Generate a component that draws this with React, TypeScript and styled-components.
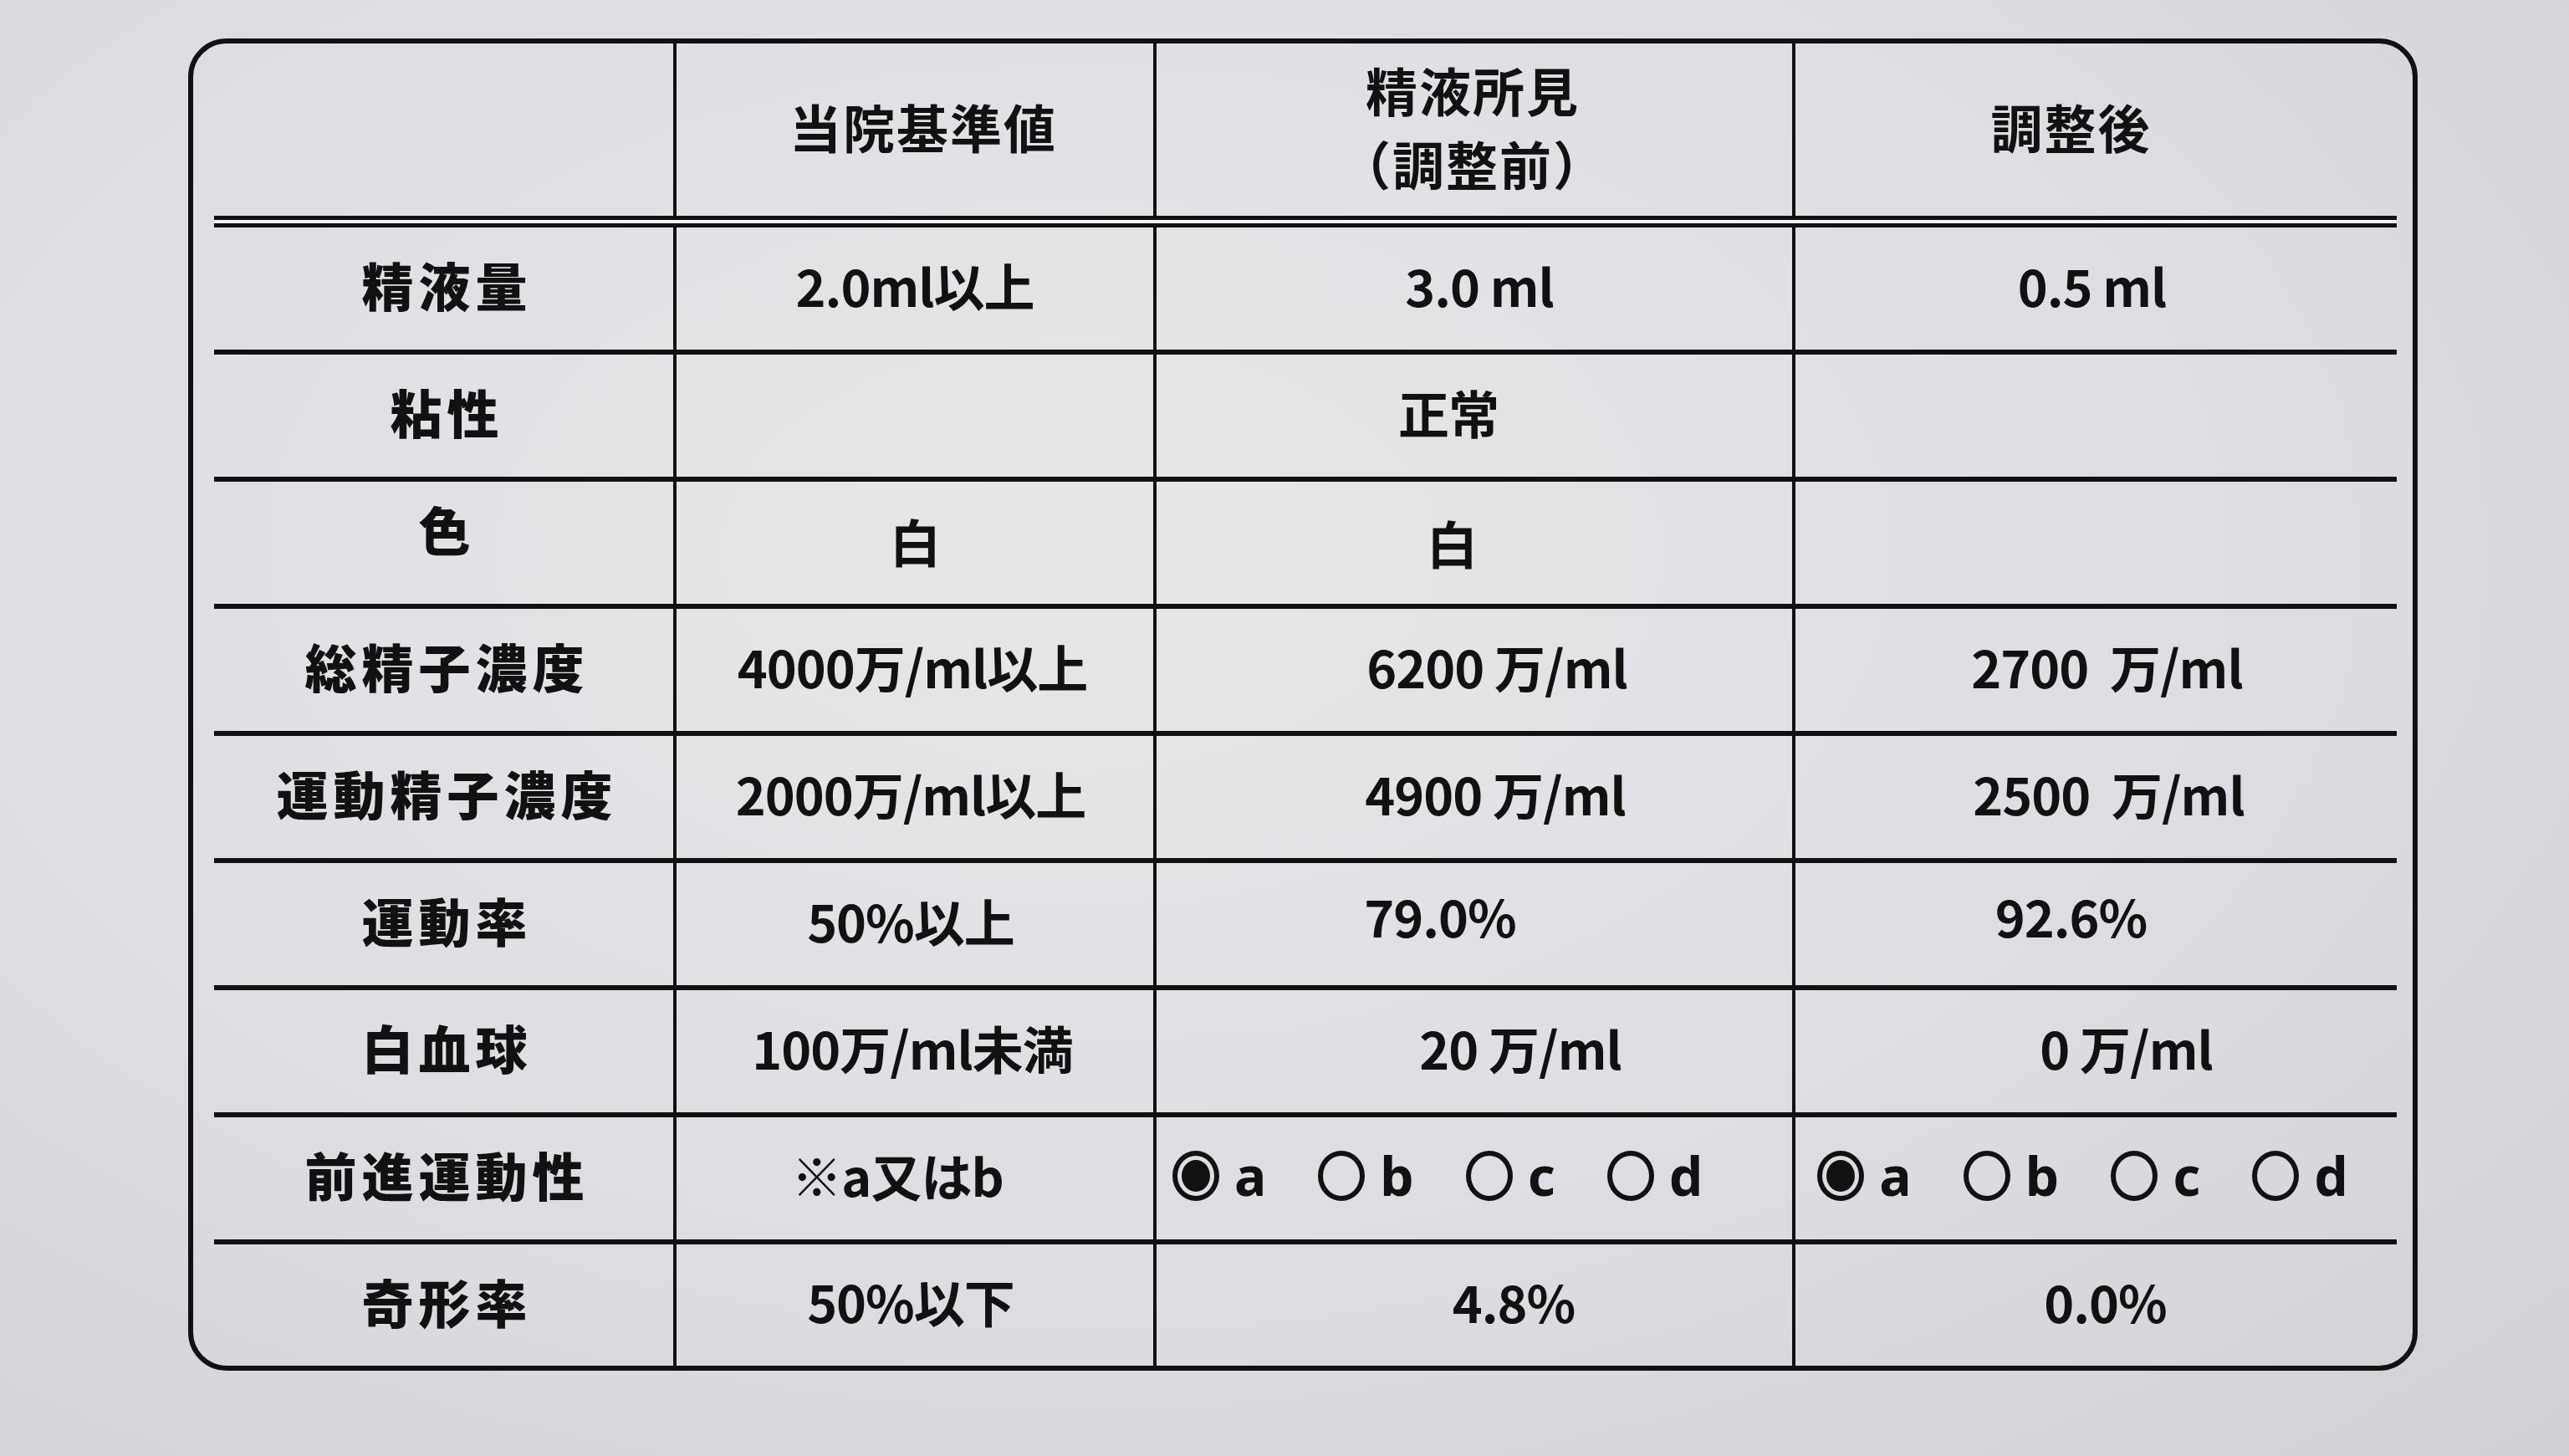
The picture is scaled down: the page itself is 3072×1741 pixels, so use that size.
import React from 'react';
import styled, { createGlobalStyle } from 'styled-components';

const INK = '#111';

const GlobalStyle = createGlobalStyle`
  html, body { margin: 0; padding: 0; }
  body {
    width: 3072px;
    height: 1741px;
    overflow: hidden;
    background: radial-gradient(ellipse at 42% 38%, #e6e7e9 0%, #dddee1 55%, #d0d1d4 100%);
    font-family: "Noto Sans CJK JP", "Noto Sans", sans-serif;
    color: ${INK};
  }
`;

const Page = styled.div`
  padding: 46px 0 0 225px;
`;

const Frame = styled.div`
  box-sizing: border-box;
  width: 2666px;
  border: 6px solid ${INK};
  border-radius: 46px;
  padding: 0 19px 0 25px;
`;

const Grid = styled.div`
  display: grid;
  grid-template-columns: 549px 574px 764px 723px;
`;

const HeadCell = styled.div<{ $lead?: boolean }>`
  box-sizing: border-box;
  height: 206px;
  display: flex;
  align-items: center;
  justify-content: center;
  border-left: ${p => (p.$lead ? 'none' : `4px solid ${INK}`)};
`;

const HeaderRule = styled.div`
  grid-column: 1 / -1;
  height: 4px;
  border-top: 5px solid ${INK};
  border-bottom: 5px solid ${INK};
  background: #f1f2f3;
`;

const Cell = styled.div<{ $lead?: boolean; $end?: boolean }>`
  box-sizing: border-box;
  height: ${p => (p.$end ? 145 : 152)}px;
  display: flex;
  align-items: center;
  justify-content: center;
  border-left: ${p => (p.$lead ? 'none' : `4px solid ${INK}`)};
  border-bottom: ${p => (p.$end ? 'none' : `6px solid ${INK}`)};
`;

const HeadText = styled.div<{ $dx?: number }>`
  font-size: 62px;
  font-weight: 700;
  letter-spacing: 2px;
  line-height: 88px;
  text-align: center;
  transform: translate(${p => p.$dx ?? 0}px, -4px);
`;

const Label = styled.div<{ $dy?: number }>`
  font-size: 62px;
  font-weight: 900;
  letter-spacing: 6px;
  white-space: nowrap;
  transform: translate(4px, ${p => (p.$dy ?? 0) - 5}px);
`;

const Value = styled.div<{ $dx?: number; $dy?: number }>`
  font-size: 61px;
  font-weight: 700;
  letter-spacing: -1px;
  white-space: pre;
  transform: translate(${p => p.$dx ?? 0}px, ${p => (p.$dy ?? 0) - 5}px);
`;

const Options = styled.div<{ $inset: number }>`
  width: 100%;
  display: flex;
  align-items: center;
  padding-left: ${p => p.$inset}px;
  transform: translateY(-3px);
`;

const Option = styled.div`
  display: flex;
  align-items: center;
  margin-right: 62px;
`;

const Radio = styled.span<{ $checked?: boolean }>`
  position: relative;
  box-sizing: border-box;
  width: 56px;
  height: 60px;
  border: 6px solid ${INK};
  border-radius: 50%;
  &::after {
    content: '';
    position: absolute;
    inset: 5px;
    border-radius: 50%;
    background: ${p => (p.$checked ? INK : 'transparent')};
  }
`;

const Letter = styled.span`
  margin-left: 18px;
  font-family: "Noto Sans", "Liberation Sans", sans-serif;
  font-size: 64px;
  font-weight: 700;
  line-height: 1;
`;

type V = [string, number?, number?];

type Row = {
  label: string;
  labelDy?: number;
  norm: V;
  before: V;
  after: V;
};

const rows: Row[] = [
  { label: '精液量', norm: ['2.0ml以上'], before: ['3.0 ml', 6], after: ['0.5 ml', -5] },
  { label: '粘性', norm: [''], before: ['正常', -31], after: [''] },
  { label: '色', labelDy: -12, norm: ['白', 0, 2], before: ['白', -27, 4], after: [''] },
  { label: '総精子濃度', norm: ['4000万/ml以上', -3], before: ['6200 万/ml', 27], after: ['2700  万/ml', 13] },
  { label: '運動精子濃度', norm: ['2000万/ml以上', -5], before: ['4900 万/ml', 25], after: ['2500  万/ml', 15] },
  { label: '運動率', norm: ['50%以上', -5], before: ['79.0%', -41, -6], after: ['92.6%', -30, -6] },
  { label: '白血球', norm: ['100万/ml未満', -3], before: ['20 万/ml', 55], after: ['0 万/ml', 36] },
];

const letters = ['a', 'b', 'c', 'd'];

const Choice = ({ inset }: { inset: number }) => (
  <Options $inset={inset}>
    {letters.map((l, i) => (
      <Option key={l}>
        <Radio $checked={i === 0} />
        <Letter>{l}</Letter>
      </Option>
    ))}
  </Options>
);

const ValueCell = ({ v, end }: { v: V; end?: boolean }) => (
  <Cell $end={end}>
    <Value $dx={v[1]} $dy={v[2]}>{v[0]}</Value>
  </Cell>
);

const App = () => {
  return (
    <>
      <GlobalStyle />
      <Page>
        <Frame>
          <Grid>
            <HeadCell $lead />
            <HeadCell>
              <HeadText $dx={10}>当院基準値</HeadText>
            </HeadCell>
            <HeadCell>
              <HeadText $dx={-2}>
                精液所見
                <br />
                （調整前）
              </HeadText>
            </HeadCell>
            <HeadCell>
              <HeadText $dx={-30}>調整後</HeadText>
            </HeadCell>
            <HeaderRule />

            {rows.map(r => (
              <React.Fragment key={r.label}>
                <Cell $lead>
                  <Label $dy={r.labelDy}>{r.label}</Label>
                </Cell>
                <ValueCell v={r.norm} />
                <ValueCell v={r.before} />
                <ValueCell v={r.after} />
              </React.Fragment>
            ))}

            <Cell $lead>
              <Label>前進運動性</Label>
            </Cell>
            <Cell>
              <Value $dx={-21}>※a又はb</Value>
            </Cell>
            <Cell>
              <Choice inset={19} />
            </Cell>
            <Cell>
              <Choice inset={30} />
            </Cell>

            <Cell $lead $end>
              <Label>奇形率</Label>
            </Cell>
            <ValueCell v={['50%以下', -5]} end />
            <ValueCell v={['4.8%', 47]} end />
            <ValueCell v={['0.0%', 11]} end />
          </Grid>
        </Frame>
      </Page>
    </>
  );
};

export default App;
